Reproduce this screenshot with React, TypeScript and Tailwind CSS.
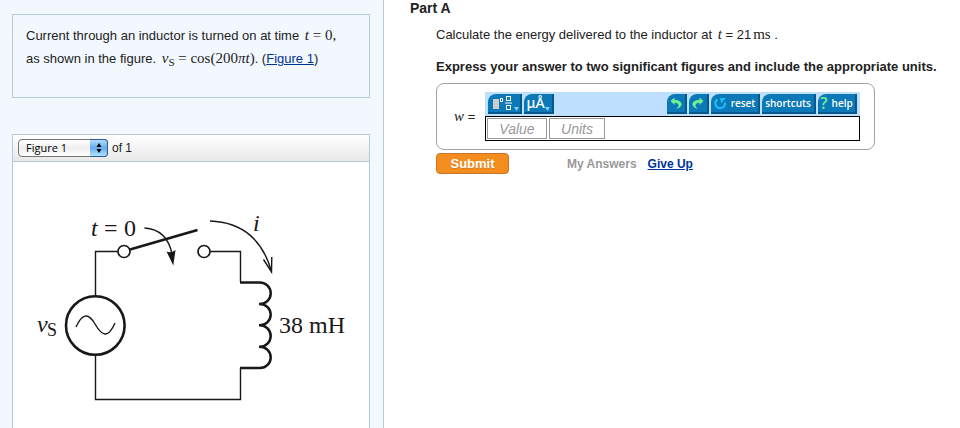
import type { ReactNode } from "react";

// Shared look for the serif maths that sits inside sentences
function MathText({ children }: { children: ReactNode }) {
  return <span className="pl-0.5 font-['Liberation_Serif',serif] text-[15px] leading-4">{children}</span>;
}

interface ToolButtonProps {
  label: string;
  className: string;
  children: ReactNode;
}

function ToolButton({ label, className, children }: ToolButtonProps) {
  return (
    <button
      type="button"
      aria-label={label}
      className={`flex h-5 shrink-0 items-center justify-center rounded-tl-lg border-r-2 border-b-2 border-[#07588e] bg-[#0b78b8] font-['Open_Sans',sans-serif] text-[10px] leading-4 font-semibold text-white ${className}`}
    >
      {children}
    </button>
  );
}

function TemplateIcon() {
  return (
    <svg width="30" height="18" viewBox="0 0 30 18" className="shrink-0" fill="none" stroke="#fff">
      <rect x="4" y="5" width="6" height="10" fill="#ccc" stroke="none" />
      <rect x="11.500" y="4.500" width="2" height="3" />
      <rect x="17.500" y="2.500" width="4" height="4" />
      <path d="M16 9h7" />
      <rect x="17.500" y="11.500" width="4" height="4" />
      <path d="M25 13h5l-2.500 4z" fill="#7fd3f5" stroke="none" />
    </svg>
  );
}

function UndoIcon({ flip = false }: { flip?: boolean }) {
  return (
    <svg width="12" height="12" viewBox="0 0 12 12" className="shrink-0">
      <path
        transform={flip ? "translate(12 0) scale(-1 1)" : undefined}
        d="M0.500 4L4.500 0.500V2.800C9 3 11.700 5 11.500 7.500C11.200 9.800 9.500 11.300 6 11.800C8.300 10.300 9 9 8.300 7.500C7.700 6.300 6.500 5.700 4.500 5.700V8z"
        fill="#6ff08e"
      />
    </svg>
  );
}

function ResetIcon() {
  return (
    <svg width="13" height="13" viewBox="0 0 13 13" className="shrink-0" fill="none">
      <path d="M3.500 2.500A4.700 4.700 0 1 0 10.800 5.500" stroke="#21b8f5" strokeWidth="2.200" />
      <path d="M6 1h6L7 6.500z" fill="#21b8f5" />
    </svg>
  );
}

function Toolbar() {
  return (
    <div className="flex h-6 items-center justify-between bg-[#bfdfff] px-[3px]">
      <div className="flex gap-0.5">
        <ToolButton label="Templates" className="w-[34px]">
          <TemplateIcon />
        </ToolButton>
        <ToolButton label="Units and symbols" className="w-[30px]">
          <span className="font-['Noto_Sans',sans-serif] text-sm font-medium">μÅ</span>
          <svg width="5" height="18" viewBox="0 0 5 18" className="shrink-0">
            <path d="M0 13h5l-2.500 4z" fill="#7fd3f5" />
          </svg>
        </ToolButton>
      </div>
      <div className="flex gap-0.5">
        <ToolButton label="Undo" className="w-5">
          <UndoIcon />
        </ToolButton>
        <ToolButton label="Redo" className="w-5">
          <UndoIcon flip />
        </ToolButton>
        <ToolButton label="reset" className="w-[49px] gap-1">
          <ResetIcon />
          reset
        </ToolButton>
        <ToolButton label="shortcuts" className="w-[54px]">
          shortcuts
        </ToolButton>
        <ToolButton label="help" className="w-[39px] gap-1">
          <span className="text-base leading-4 text-[#6ff08e]">?</span>
          help
        </ToolButton>
      </div>
    </div>
  );
}

function CircuitFigure() {
  return (
    <svg
      viewBox="13 162 356 266"
      className="w-full"
      fill="none"
      stroke="#1b1718"
      strokeWidth="1.400"
      role="img"
      aria-label="Voltage source, switch and inductor in series"
    >
      {/* wires */}
      <path d="M95.500 296V251.500H118M210 251.500H240.500V282M95.500 355V399.500H240.500V368" />
      {/* switch */}
      <circle cx="124" cy="251.500" r="6" strokeWidth="1.700" />
      <circle cx="204" cy="251.500" r="6" strokeWidth="1.700" />
      <path d="M130 249.500L197.500 230" strokeWidth="2.800" />
      <path d="M144.500 228C160 229 169 239 172 254" />
      <path d="M166.500 251.500Q171 253.500 175.500 250L173.300 265.500z" fill="#1b1718" stroke="none" />
      {/* source */}
      <circle cx="95.300" cy="325.500" r="29.300" strokeWidth="2.600" />
      <path d="M76 327C82 314 88 312 95 324C102 336 108 339 115 323" />
      {/* inductor */}
      <path
        d="M240 282.500H260a10.700 10.700 0 0 1 0 21.400h-1h1a10.700 10.700 0 0 1 0 21.400h-1h1a10.700 10.700 0 0 1 0 21.400h-1h1a10.700 10.700 0 0 1 0 21.400H240"
        strokeWidth="2.500"
      />
      {/* current arrow */}
      <path d="M210 221C244 222 263 242 271 270" />
      <path d="M263.500 259.500L271.500 272L271.800 257" />
      <g fill="#1b1718" stroke="none" fontFamily="'Liberation Serif', serif" fontSize="24">
        <text x="91" y="236" fontStyle="italic">t</text>
        <text x="104" y="236">=</text>
        <text x="124" y="236">0</text>
        <text x="253" y="231" fontStyle="italic">i</text>
        <text x="37" y="332" fontStyle="italic">v</text>
        <text x="47" y="336" fontSize="18">S</text>
        <text x="279" y="333">38 mH</text>
      </g>
    </svg>
  );
}

function FigurePanel() {
  return (
    <section className="flex-1 border border-b-0 border-[#b5c9db] bg-white">
      <div className="flex h-[27px] items-center gap-1 border-b border-[#b5cbdc] bg-linear-to-b from-white to-[#e8e8e8] px-[5px]">
        <div className="relative">
          <select
            aria-label="Figure"
            className="block h-[18px] w-[90px] appearance-none rounded border border-[#777] bg-linear-to-b from-white via-[#eee] to-white pl-[7px] font-['Open_Sans',sans-serif] text-[11px] leading-4 text-black"
          >
            <option>Figure 1</option>
          </select>
          <span className="pointer-events-none absolute inset-y-0 right-0 flex w-[18px] items-center justify-center rounded-r border border-l-0 border-[#34569c] bg-linear-to-b from-[#b5dcf8] via-[#62aceb] to-[#b1e6fb]">
            <svg width="6" height="10" viewBox="0 0 6 10">
              <path d="M3 0l2.500 4h-5zM3 10l2.500-4h-5z" />
            </svg>
          </span>
        </div>
        <span className="text-[12px]">of 1</span>
      </div>
      <CircuitFigure />
    </section>
  );
}

function ProblemPanel() {
  return (
    <aside className="flex w-2/5 shrink-0 flex-col gap-9 border-r border-[#b5c9db] bg-[#f3f8ff] pt-3.5 pr-[13px] pl-3">
      <section className="h-[84px] border border-[#b5c9db] px-[13px] pt-[9px] leading-[23px] whitespace-nowrap">
        <p>
          Current through an inductor is turned on at time{" "}
          <MathText>
            <i>t</i> = 0,
          </MathText>
        </p>
        <p>
          as shown in the figure.{" "}
          <MathText>
            <i>v</i>
            <sub className="text-[11px]">S</sub> = cos(200<i>πt</i>)
          </MathText>
          . (
          <a href="#figure" className="text-[#003399] underline">
            Figure 1
          </a>
          )
        </p>
      </section>
      <FigurePanel />
    </aside>
  );
}

function AnswerPanel() {
  return (
    <main className="min-w-0 flex-1 pl-[26px] whitespace-nowrap">
      <h2 className="text-sm leading-4 font-bold">Part A</h2>
      <div className="pl-[26px]">
        <p className="mt-2.5 leading-4">
          Calculate the energy delivered to the inductor at{" "}
          <MathText>
            <i>t</i>
          </MathText>{" "}
          = 21
          <MathText>ms</MathText> .
        </p>
        <p className="mt-4 leading-4 font-bold">
          Express your answer to two significant figures and include the appropriate units.
        </p>
        <div className="mt-2 flex max-w-[439px] items-center rounded-lg border border-[#a3a3a3] py-2 pr-3.5 pl-[15px]">
          <span className="w-[33px] shrink-0">
            <MathText>
              <i>w</i>
            </MathText>{" "}
            =
          </span>
          <div className="flex-1">
            <Toolbar />
            <div className="flex h-[25px] gap-0.5 border border-black p-px">
              <input
                aria-label="Value"
                placeholder="Value"
                className="w-[60px] border border-[#999] text-center text-sm italic placeholder:text-[#999]"
              />
              <input
                aria-label="Units"
                placeholder="Units"
                className="w-14 border border-[#999] text-center text-sm italic placeholder:text-[#999]"
              />
            </div>
          </div>
        </div>
        <div className="mt-[3px] flex items-center text-[12px] font-bold">
          <button
            type="button"
            className="h-[21px] w-[73px] rounded border border-[#cf7426] bg-[#f28d1e] text-[13px] text-white text-shadow-2xs"
          >
            Submit
          </button>
          <span className="ml-[58px] text-[#999]">My Answers</span>
          <a href="#give-up" className="ml-[11px] text-[#003399] underline">
            Give Up
          </a>
        </div>
      </div>
    </main>
  );
}

export default function App() {
  return (
    <div className="flex min-h-screen bg-white font-['Liberation_Sans',Arial,sans-serif] text-[13px] text-[#222]">
      <ProblemPanel />
      <AnswerPanel />
    </div>
  );
}
